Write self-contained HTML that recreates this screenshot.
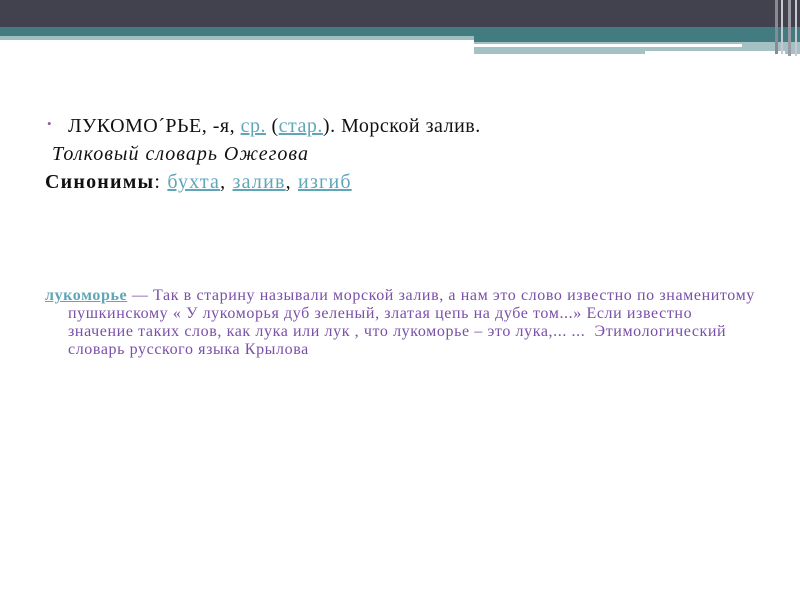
<!DOCTYPE html>
<html><head><meta charset="utf-8"><style>
body{margin:0;width:800px;height:600px;background:#fff;position:relative;overflow:hidden;font-family:"Liberation Serif","DejaVu Serif",serif}
.a{position:absolute;white-space:nowrap}
a{color:#5fa6b8;text-decoration:underline}
</style></head><body>
<div class="a" style="left:0;top:0;width:800px;height:27px;background:#42424f"></div>
<div class="a" style="left:0;top:27px;width:800px;height:9px;background:#437c80"></div>
<div class="a" style="left:0;top:36px;width:474px;height:4px;background:#9fbfc0"></div>
<div class="a" style="left:474px;top:36px;width:326px;height:6px;background:#437c80"></div>
<div class="a" style="left:474px;top:42px;width:326px;height:12px;background:#a5c1c3"></div>
<div class="a" style="left:474px;top:44px;width:268px;height:3px;background:#fff"></div>
<div class="a" style="left:645px;top:51px;width:140px;height:3px;background:#fff"></div>
<div class="a" style="left:775px;top:0;width:3px;height:54px;background:#8a8a95"></div>
<div class="a" style="left:781px;top:0;width:2px;height:54px;background:#c8c8d0"></div>
<div class="a" style="left:788px;top:0;width:3px;height:56px;background:#9a9aa5"></div>
<div class="a" style="left:795px;top:0;width:2px;height:56px;background:#c8c8d0"></div>

<div class="a" style="left:47px;top:116px;font-size:13px;color:#8c5fa8">•</div>
<div class="a" style="left:68px;top:115px;font-size:20px;letter-spacing:0.5px;color:#111">ЛУКОМО´РЬЕ, -я, <a>ср.</a> (<a>стар.</a>). Морской залив.</div>
<div class="a" style="left:52px;top:143px;font-size:20px;letter-spacing:1px;font-style:italic;color:#111">Толковый словарь Ожегова</div>
<div class="a" style="left:45px;top:171px;font-size:20px;letter-spacing:1.2px;color:#111"><b>Синонимы</b>: <a>бухта</a>, <a>залив</a>, <a>изгиб</a></div>

<div class="a" style="left:45px;top:287px;font-size:16px;letter-spacing:0.6px;line-height:18px;color:#7a4fa8"><a style="font-weight:bold">лукоморье</a> — Так в старину называли морской залив, а нам это слово известно по знаменитому<br><span style="padding-left:23px">пушкинскому « У лукоморья дуб зеленый, златая цепь на дубе том...» Если известно</span><br><span style="padding-left:23px">значение таких слов, как лука или лук , что лукоморье – это лука,... ...&nbsp; Этимологический</span><br><span style="padding-left:23px">словарь русского языка Крылова</span></div>
</body></html>
